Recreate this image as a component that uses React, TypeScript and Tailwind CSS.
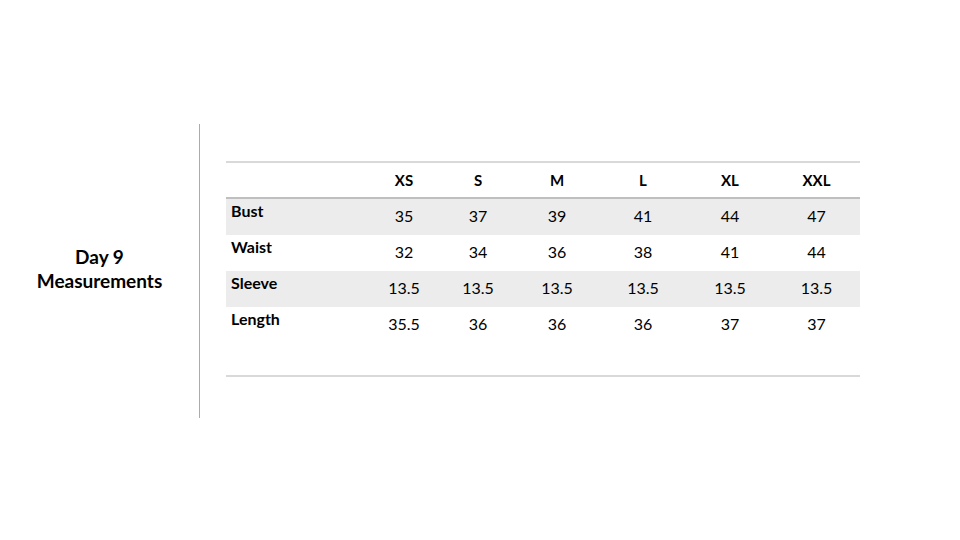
import React from "react";

const sizes = ["XS", "S", "M", "L", "XL", "XXL"];
const rows: { label: string; values: string[]; shaded: boolean }[] = [
  { label: "Bust", values: ["35", "37", "39", "41", "44", "47"], shaded: true },
  { label: "Waist", values: ["32", "34", "36", "38", "41", "44"], shaded: false },
  { label: "Sleeve", values: ["13.5", "13.5", "13.5", "13.5", "13.5", "13.5"], shaded: true },
  { label: "Length", values: ["35.5", "36", "36", "36", "37", "37"], shaded: false },
];

const grid = "grid grid-cols-[141px_74px_74px_84px_88px_86px_87px]";

export default function App() {
  return (
    <div
      className="w-[960px] h-[540px] bg-white flex text-black"
      style={{ fontFamily: "Lato, 'Open Sans', sans-serif" }}
    >
      <div className="w-[199px] flex items-center justify-center">
        <div className="text-center font-bold text-[19px] leading-[24px] mt-[-2px]">
          <div>Day 9</div>
          <div>Measurements</div>
        </div>
      </div>
      <div className="mt-[124px] h-[294px] w-px bg-[#c9a194]" />
      <div className="ml-[26px] mt-[161px] w-[634px]">
        <div className={`${grid} h-[38px] border-t-2 border-b-2 border-t-[#d9d9d9] border-b-[#bfbfbf]`}>
          <div />
          {sizes.map((s) => (
            <div key={s} className="flex items-center justify-center font-bold text-[15px]">
              {s}
            </div>
          ))}
        </div>
        {rows.map((r) => (
          <div key={r.label} className={`${grid} h-[36px] ${r.shaded ? "bg-[#ececec]" : "bg-white"}`}>
            <div className="pl-[5px] pt-[2px] font-bold text-[16px] leading-[20px]">{r.label}</div>
            {r.values.map((v, i) => (
              <div key={i} className="flex items-center justify-center text-[16px] pb-[2px]">
                {v}
              </div>
            ))}
          </div>
        ))}
        <div className="h-[34px] border-b-2 border-b-[#d9d9d9]" />
      </div>
    </div>
  );
}
